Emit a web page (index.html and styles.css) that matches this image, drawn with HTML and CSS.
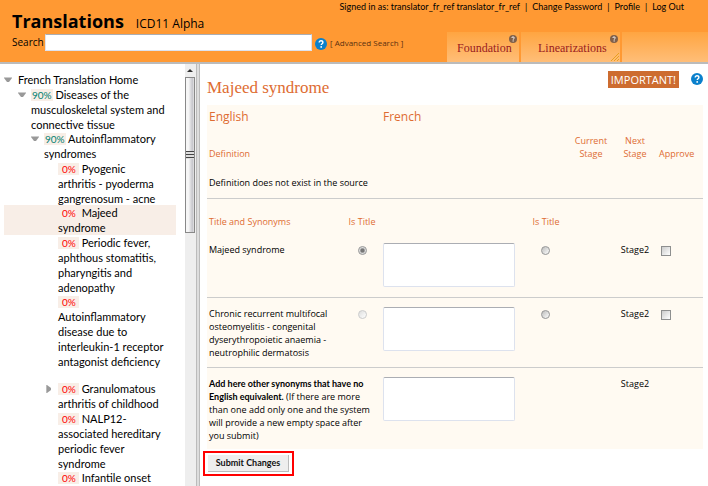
FILE: index.html
```html
<!DOCTYPE html>
<html lang="en">
<head>
<meta charset="utf-8">
<title>Translations - ICD11 Alpha</title>
<link rel="stylesheet" href="styles.css">
</head>
<body>
<svg class="defs" aria-hidden="true">
  <symbol id="down" viewBox="0 0 8 6"><path d="M0 1h8L5 5H3z" fill="#999"/><path d="M0 0h8v1H0z" fill="#ccc"/></symbol>
  <symbol id="right" viewBox="0 0 6 8"><path d="M0 0h1v8H0z" fill="#bbb"/><path d="M1 0l4 3v2l-4 3z" fill="#999"/></symbol>
  <symbol id="help" viewBox="0 0 12 12"><circle cx="6" cy="6" r="6" fill="currentColor"/><path d="M4.2 4.5C4.2 3.4 5 2.8 6 2.8s1.9.6 1.9 1.6c0 1.3-1.7 1.3-1.7 2.7" fill="none" stroke="#fff" stroke-width="1.4"/><circle cx="6.2" cy="8.9" r=".9" fill="#fff"/></symbol>
</svg>
<header class="header">
  <div class="brand">
    <h1 class="brand-title">Translations</h1>
    <span class="brand-sub">ICD11 Alpha</span>
  </div>
  <nav class="account">
    <span>Signed in as: translator_fr_ref translator_fr_ref</span><span>|</span><a href="#">Change Password</a><span>|</span><a href="#">Profile</a><span>|</span><a href="#">Log Out</a>
  </nav>
  <form class="search">
    <label for="q">Search</label>
    <input id="q" class="search-box" type="text">
    <svg class="help"><use href="#help"/></svg>
    <a class="advanced" href="#">[ Advanced Search ]</a>
  </form>
  <nav class="tabs">
    <a class="tab" href="#">Foundation<svg class="tab-help"><use href="#help"/></svg></a>
    <a class="tab tab-wide" href="#">Linearizations<svg class="tab-help"><use href="#help"/></svg><svg class="tab-grip" viewBox="0 0 9 9"><path d="M0 9L8 1M3 9l5-5M6 9l2-2" stroke="#e8a020" fill="none"/></svg></a>
    <span class="tab-rest"></span>
  </nav>
</header>
<div class="body">
  <aside class="sidebar">
    <ul class="tree">
      <li><div class="node l0"><svg class="arrow"><use href="#down"/></svg>French Translation Home</div></li>
      <li><div class="node l1 long"><svg class="arrow"><use href="#down"/></svg><span class="pct done">90%</span> Diseases of the musculoskeletal system and connective tissue</div></li>
      <li><div class="node l2"><svg class="arrow"><use href="#down"/></svg><span class="pct done">90%</span> Autoinflammatory syndromes</div></li>
      <li><div class="node l3 long"><span class="pct">0%</span> Pyogenic arthritis - pyoderma gangrenosum - acne</div></li>
      <li><div class="node l3 selected"><span class="pct">0%</span> Majeed syndrome</div></li>
      <li><div class="node l3 long"><span class="pct">0%</span> Periodic fever, aphthous stomatitis, pharyngitis and adenopathy</div></li>
      <li><div class="node l3 last"><span class="pct">0%</span> Autoinflammatory disease due to interleukin-1 receptor antagonist deficiency</div></li>
      <li><div class="node l3"><svg class="arrow"><use href="#right"/></svg><span class="pct">0%</span> Granulomatous arthritis of childhood</div></li>
      <li><div class="node l3 long"><span class="pct">0%</span> NALP12-associated hereditary periodic fever syndrome</div></li>
      <li><div class="node l3"><span class="pct">0%</span> Infantile onset</div></li>
    </ul>
    <div class="scrollbar">
      <svg class="scroll-up" viewBox="0 0 10 13"><path d="M2 8h6L5 5z" fill="#333"/></svg>
      <div class="thumb"><span class="grip"></span></div>
    </div>
  </aside>
  <div class="splitter"></div>
  <main class="main">
    <div class="main-head">
      <h2 class="concept">Majeed syndrome</h2>
      <button class="important" type="button">IMPORTANT!</button>
      <svg class="help"><use href="#help"/></svg>
    </div>
    <form>
      <table class="grid">
        <colgroup><col class="c-text"><col class="c-radio"><col class="c-french"><col class="c-radio2"><col class="c-stage"><col class="c-stage"><col class="c-approve"></colgroup>
        <tbody>
          <tr class="lang"><th colspan="2">English</th><th colspan="5">French</th></tr>
          <tr class="stages"><th colspan="4">Definition</th><th class="mid">Current Stage</th><th class="mid">Next Stage</th><th>Approve</th></tr>
          <tr class="definition line"><td colspan="7">Definition does not exist in the source</td></tr>
          <tr class="titles"><th>Title and Synonyms</th><th class="mid">Is Title</th><th></th><th class="mid">Is Title</th><th colspan="3"></th></tr>
          <tr class="entry first line"><td>Majeed syndrome</td><td class="mid"><input class="radio off" type="radio" name="en" aria-label="English title 1" checked></td><td><textarea aria-label="French 1"></textarea></td><td class="mid"><input class="radio" type="radio" name="fr" aria-label="French title 1"></td><td></td><td class="mid">Stage2</td><td><input class="check" type="checkbox" aria-label="Approve 1"></td></tr>
          <tr class="entry line"><td>Chronic recurrent multifocal osteomyelitis - congenital dyserythropoietic anaemia - neutrophilic dermatosis</td><td class="mid"><input class="radio faint" type="radio" name="en" aria-label="English title 2"></td><td><textarea aria-label="French 2"></textarea></td><td class="mid"><input class="radio" type="radio" name="fr" aria-label="French title 2"></td><td></td><td class="mid">Stage2</td><td><input class="check" type="checkbox" aria-label="Approve 2"></td></tr>
          <tr class="entry final"><td colspan="2"><b>Add here other synonyms that have no English equivalent.</b> (If there are more than one add only one and the system will provide a new empty space after you submit)</td><td><textarea aria-label="French synonym"></textarea></td><td></td><td></td><td class="mid">Stage2</td><td></td></tr>
        </tbody>
      </table>
      <div class="submit-mark"><button class="submit" type="submit">Submit Changes</button></div>
    </form>
  </main>
</div>
</body>
</html>
```
FILE: styles.css
```css
* { box-sizing: border-box; }
body {
  margin: 0;
  height: 100vh;
  display: flex;
  flex-direction: column;
  overflow: hidden;
  background: #fff;
  color: #000;
  font: 9px/13px "Open Sans", "Noto Sans", sans-serif;
}
a { color: inherit; text-decoration: none; }
.defs { position: absolute; width: 0; height: 0; }
.help { width: 12px; height: 12px; color: #0a80cc; flex: none; }

/* Header */
.header {
  display: grid;
  grid-template-columns: auto auto 1fr;
  grid-template-rows: 32px 30px;
  background: #ff9933;
  border-bottom: 2px solid #bbb;
  flex: none;
}
.brand { display: flex; align-items: baseline; gap: 12px; padding: 7px 0 0 12px; }
.brand-title { margin: 0; font-size: 18px; line-height: 28px; font-weight: 700; }
.brand-sub { font-size: 12px; }
.account {
  grid-column: 2 / 4;
  display: flex;
  justify-content: flex-end;
  gap: 5px;
  padding-right: 24px;
  white-space: nowrap;
  font-family: Lato, sans-serif;
}
.search {
  grid-column: 1 / 3;
  width: 447px;
  display: flex;
  align-items: center;
  padding: 1px 0 11px 12px;
  font: 10px/13px "Open Sans", sans-serif;
}
.search label { width: 33px; flex: none; }
.search-box {
  flex: 1;
  min-width: 0;
  max-width: 267px;
  height: 17px;
  border: 1px solid #dde2ee;
  border-top-color: #abadb3;
  padding: 0 2px;
  margin-right: 3px;
  background: #fff;
}
.advanced { font-size: 8px; margin-left: 3px; color: #5a3010; }
.search .help { margin-top: 4px; }
.tabs { display: flex; gap: 2px; }
.tab {
  position: relative;
  padding: 8px 8px 0 10px;
  width: 72px;
  color: #9a1b1e;
  font: 12px/16px "Liberation Serif", serif;
  background: linear-gradient(#ffa541, #ffbe78);
}
.tab-wide { width: 99px; padding-left: 17px; }
.tab-rest { flex: 1; background: linear-gradient(#ffa541, #ffbe78); }
.tab-help { position: absolute; top: 3px; right: 2px; width: 8px; height: 8px; color: #80604a; }
.tab-grip { position: absolute; right: 0; bottom: 1px; width: 9px; height: 9px; }

/* Tree */
.body { flex: 1; min-height: 0; display: flex; }
.sidebar { flex: none; width: 196px; display: flex; justify-content: space-between; }
.tree { list-style: none; margin: 0; padding: 8px 0 0 4px; width: 176px; font: 11px/15px Lato, "Open Sans", sans-serif; }
.node { position: relative; padding-right: 9px; }
.l0 { padding-left: 14px; }
.l1 { padding-left: 27px; }
.l2 { padding-left: 40px; }
.l3 { padding-left: 54px; padding-right: 12px; }
.long { margin-bottom: -1px; }
.last { margin-bottom: 12px; }
.selected { position: static; background: #f8eee7; }
.pct {
  padding: 0 3px 0 4px;
  line-height: 11px;
  font-size: 10px;
  background: #f8eee7;
  color: #f00;
}
.done { color: #008070; padding: 0 1px; }
.arrow { position: absolute; top: 5px; width: 8px; height: 6px; }
.l0 .arrow { left: 0; }
.l1 .arrow { left: 14px; }
.l2 .arrow { left: 27px; }
.l3 .arrow { left: 41px; top: 4px; height: 8px; }
.scrollbar { width: 11px; background: #eee; }
.scroll-up { display: block; width: 10px; height: 13px; }
.thumb {
  display: flex;
  align-items: center;
  height: 156px;
  width: 10px;
  border: 1px solid #888;
  background: linear-gradient(90deg, #f6f6f6 30%, #c6c6cc 80%, #e4e4e4);
}
.grip { width: 8px; height: 8px; background: repeating-linear-gradient(#444 0 1px, #ddd 1px 3px); }
.splitter { flex: none; width: 4px; background: #ddd; border: solid #bbb; border-width: 0 1px; }

/* Translation form */
.main { flex: 1; min-width: 0; padding: 7px 5px 0 7px; }
.main-head { display: flex; height: 34px; align-items: flex-start; }
.concept { margin: 7px auto 0 0; font: 17px/20px "Liberation Serif", serif; color: #de6c32; }
.important {
  height: 17px;
  margin-right: 12px;
  padding: 0 3px;
  border: 0;
  background: #cd6c30;
  color: #fff;
  font: 11px/16px "Open Sans", sans-serif;
}
.main-head .help { margin-top: 2px; }
.grid { width: 100%; table-layout: fixed; border-collapse: collapse; background: #fffaf2; }
.c-text { width: 138px; }
.c-radio { width: 34px; }
.c-radio2 { width: 46px; }
.c-stage { width: 44px; }
.c-approve { width: 46px; }
.grid th, .grid td { padding: 0 2px; text-align: left; vertical-align: top; font-weight: 400; }
.grid th { color: #de6c32; white-space: nowrap; }
.grid .mid { text-align: center; }
.grid .lang th { height: 25px; font-size: 12px; line-height: 24px; }
.grid .stages th { height: 42px; vertical-align: bottom; padding: 0 2px 12px; }
.grid .stages .mid { white-space: normal; padding: 0 4px 12px; }
.grid .definition td { height: 26px; padding-top: 4px; }
.line { border-bottom: 1px solid #ccc; }
.grid .titles th { height: 36px; padding-top: 16px; }
.grid .titles .mid { padding-left: 0; padding-right: 0; }
.grid .entry td { height: 70px; padding-top: 9px; }
.grid .first td { height: 63px; }
.grid .final td { height: 82px; }
.grid td:has(textarea), .grid .lang th + th { padding-left: 4px; }
textarea {
  display: block;
  width: 132px;
  height: 44px;
  border: 1px solid #dde2ee;
  border-top-color: #abadb3;
  border-radius: 2px;
  resize: none;
  background: #fff;
}
.entry b { font-family: Lato, sans-serif; font-weight: 700; }
.radio, .check { appearance: none; display: block; margin: 3px auto 0; border: 1px solid #999; }
.radio { width: 9px; height: 9px; border-radius: 50%; background: linear-gradient(135deg, #bbb, #fff); }
.radio.off { background: radial-gradient(#777 30%, #ddd 60%); }
.radio.faint { border-color: #ccc; background: linear-gradient(135deg, #ddd, #fff); }
.check { width: 10px; height: 10px; margin: 3px 0 0 2px; border-color: #8e8f8f; background: linear-gradient(135deg, #ccc, #fff); }
.submit-mark { width: fit-content; margin: 2px 0 0 -4px; padding: 2px 3px; border: 2px solid #f00; }
.submit {
  display: block;
  height: 17px;
  width: 81px;
  padding: 0;
  border: solid #bbb;
  border-width: 0 1px 1px 0;
  background: #eee;
  color: #111;
  font: 700 9px/16px Lato, sans-serif;
}
```
